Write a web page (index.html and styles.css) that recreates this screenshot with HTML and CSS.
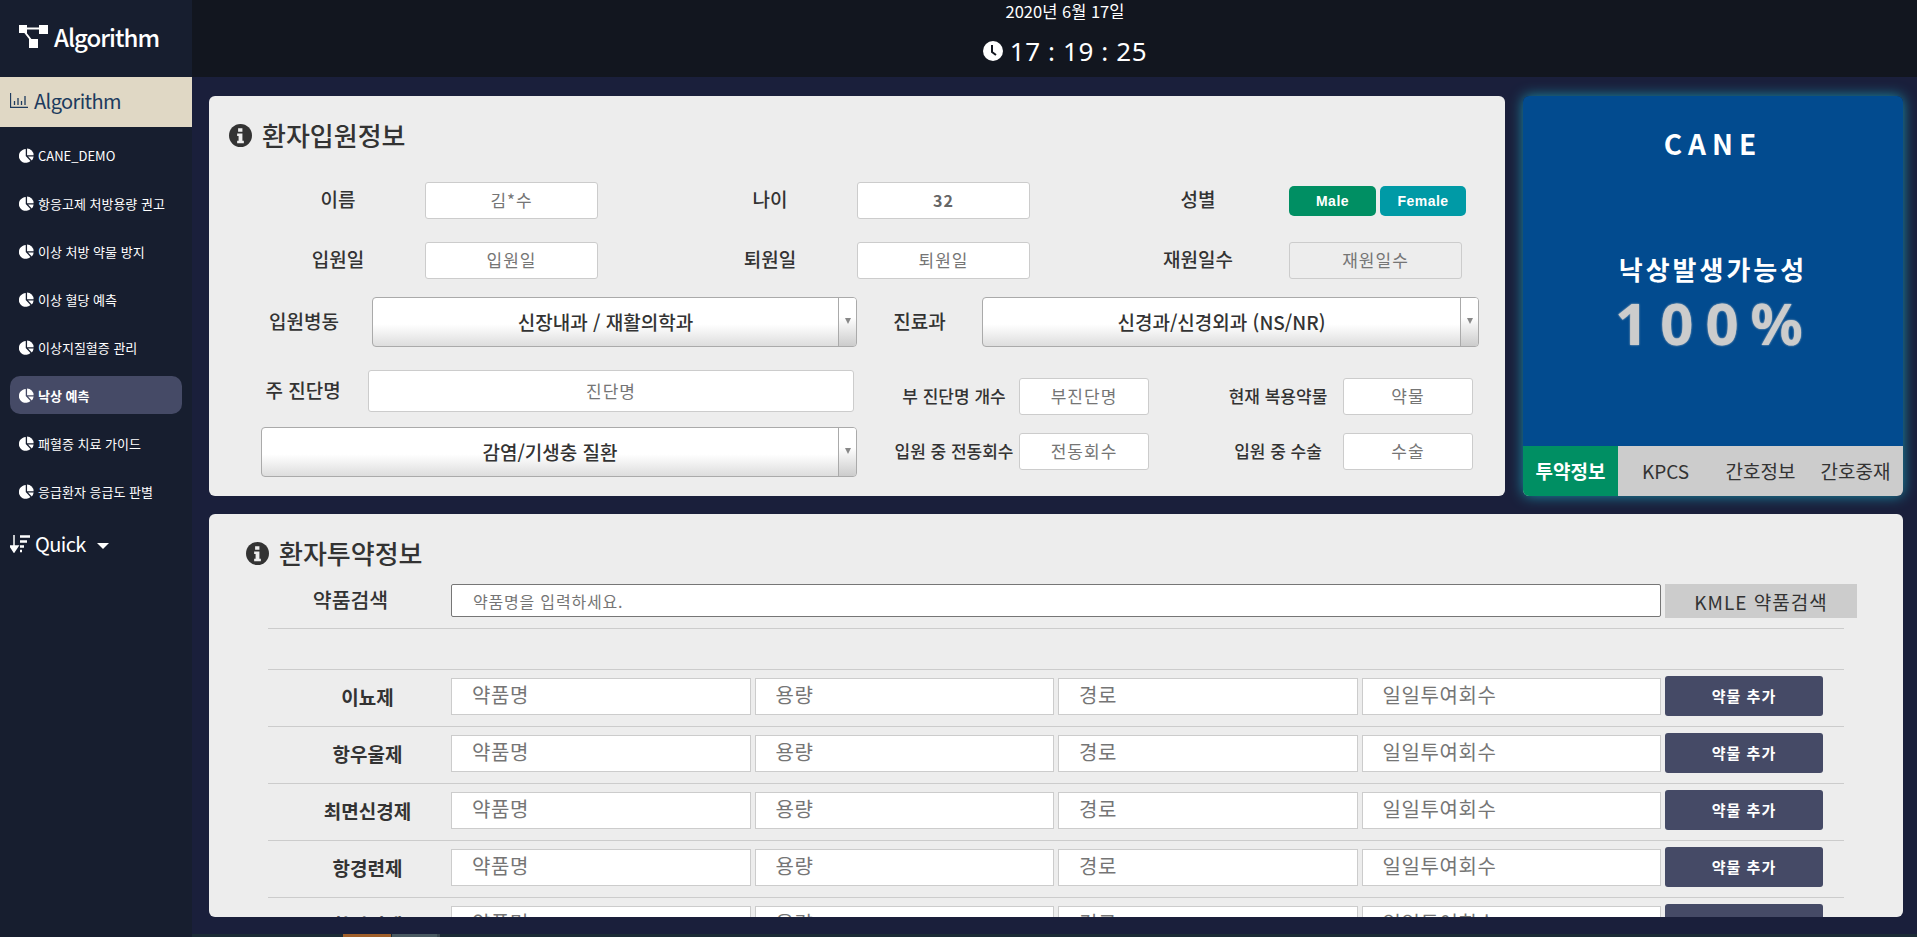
FILE: index.html
```html
<!DOCTYPE html>
<html lang="ko">
<head>
  <meta charset="UTF-8">
  <meta name="viewport" content="width=device-width, initial-scale=1.0">
  <title>CANE Algorithm</title>
  <link rel="stylesheet" href="styles.css">
</head>
<body>
  <!-- Side menu -->
  <aside class="sidebar">
    <div class="logo">
      <svg class="logo-icon" viewBox="0 0 30 24" width="30" height="24">
        <rect x="0" y="0" width="8" height="8" fill="#fff"/>
        <rect x="20" y="0" width="9" height="9" fill="#fff"/>
        <rect x="10" y="14" width="9" height="9" fill="#fff"/>
        <path d="M6 3.5h15M5 6l7 9" stroke="#fff" stroke-width="2" fill="none"/>
      </svg>
      <span>Algorithm</span>
    </div>
    <div class="menu-head">
      <svg viewBox="0 0 18 15" width="18" height="15">
        <path d="M.5 0v14.5H18M4.5 8v4M8 5v7M11.5 8v4M15 3v9" stroke="#1d3b5e" stroke-width="1.3" fill="none"/>
      </svg>
      <span>Algorithm</span>
    </div>
    <ul class="menu">
      <li><svg class="pie" viewBox="0 0 16 16"><use href="#pie"/></svg>CANE_DEMO</li>
      <li><svg class="pie" viewBox="0 0 16 16"><use href="#pie"/></svg>항응고제 처방용량 권고</li>
      <li><svg class="pie" viewBox="0 0 16 16"><use href="#pie"/></svg>이상 처방 약물 방지</li>
      <li><svg class="pie" viewBox="0 0 16 16"><use href="#pie"/></svg>이상 혈당 예측</li>
      <li><svg class="pie" viewBox="0 0 16 16"><use href="#pie"/></svg>이상지질혈증 관리</li>
      <li class="active"><svg class="pie" viewBox="0 0 16 16"><use href="#pie"/></svg>낙상 예측</li>
      <li><svg class="pie" viewBox="0 0 16 16"><use href="#pie"/></svg>패혈증 치료 가이드</li>
      <li><svg class="pie" viewBox="0 0 16 16"><use href="#pie"/></svg>응급환자 응급도 판별</li>
    </ul>
    <div class="quick">
      <svg viewBox="0 0 20 18" width="20" height="18">
        <path d="M4 0v13M0 11l4 6 4-6z" fill="#fff" stroke="#fff" stroke-width="1.5"/>
        <path d="M10 1.5h10M10 6.5h7M10 11.5h4M10 16h2" stroke="#fff" stroke-width="2.4" fill="none"/>
      </svg>
      <span>Quick</span>
      <i class="caret"></i>
    </div>
  </aside>

  <div class="main">
    <header class="topbar">
      <div class="date">2020년 6월 17일</div>
      <div class="time">
        <svg viewBox="0 0 20 20" width="20" height="20">
          <circle cx="10" cy="10" r="10" fill="#fff"/>
          <path d="M9 4v7l4 3" stroke="#12161f" stroke-width="2" fill="none"/>
        </svg>
        <span>17 : 19 : 25</span>
      </div>
    </header>

    <div class="content">
      <div class="top-row">
        <!-- 환자입원정보 -->
        <section class="panel admit">
          <h2 class="title">
            <svg class="info" viewBox="0 0 24 24"><use href="#info"/></svg>
            환자입원정보
          </h2>

          <div class="row row-one">
            <label class="lbl col-a">이름</label>
            <input class="box" type="text" placeholder="김*수">
            <label class="lbl col-b">나이</label>
            <input class="box strong" type="text" value="32">
            <label class="lbl col-c">성별</label>
            <button class="sex male" type="button">Male</button>
            <button class="sex female" type="button">Female</button>
          </div>

          <div class="row row-two">
            <label class="lbl col-a">입원일</label>
            <input class="box" type="text" placeholder="입원일">
            <label class="lbl col-b">퇴원일</label>
            <input class="box" type="text" placeholder="퇴원일">
            <label class="lbl col-c">재원일수</label>
            <input class="box off" type="text" placeholder="재원일수" disabled>
          </div>

          <div class="row row-three">
            <label class="lbl ward-lbl">입원병동</label>
            <div class="select ward"><span>신장내과 / 재활의학과</span><b></b></div>
            <label class="lbl dept-lbl">진료과</label>
            <div class="select dept"><span>신경과/신경외과 (NS/NR)</span><b></b></div>
          </div>

          <div class="bottom">
            <div class="bottom-left">
              <div class="row">
                <label class="lbl diag-lbl">주 진단명</label>
                <input class="box diag" type="text" placeholder="진단명">
              </div>
              <div class="select disease"><span>감염/기생충 질환</span><b></b></div>
            </div>
            <div class="bottom-right">
              <div class="row">
                <label class="lbl small col-d">부 진단명 개수</label>
                <input class="box short" type="text" placeholder="부진단명">
                <label class="lbl small col-e">현재 복용약물</label>
                <input class="box short" type="text" placeholder="약물">
              </div>
              <div class="row">
                <label class="lbl small col-d">입원 중 전동회수</label>
                <input class="box short" type="text" placeholder="전동회수">
                <label class="lbl small col-e">입원 중 수술</label>
                <input class="box short" type="text" placeholder="수술">
              </div>
            </div>
          </div>
        </section>

        <!-- 낙상 결과 -->
        <section class="result">
          <div class="stage">
            <div class="brand">CANE</div>
            <div class="chance">낙상발생가능성</div>
            <div class="percent">100%</div>
          </div>
          <div class="tabs">
            <div class="tab on">투약정보</div>
            <div class="tab">KPCS</div>
            <div class="tab">간호정보</div>
            <div class="tab">간호중재</div>
          </div>
        </section>
      </div>

      <!-- 환자투약정보 -->
      <section class="panel drugs">
        <h2 class="title">
          <svg class="info" viewBox="0 0 24 24"><use href="#info"/></svg>
          환자투약정보
        </h2>

        <div class="search">
          <label class="drug-lbl search-lbl">약품검색</label>
          <input class="search-box" type="text" placeholder="약품명을 입력하세요.">
          <button class="kmle" type="button">KMLE 약품검색</button>
        </div>
        <div class="blank"></div>

        <div class="drug-row">
          <label class="drug-lbl">이뇨제</label>
          <div class="drug-fields">
            <input type="text" placeholder="약품명"><input type="text" placeholder="용량"><input type="text" placeholder="경로"><input type="text" placeholder="일일투여회수">
          </div>
          <button class="add" type="button">약물 추가</button>
        </div>
        <div class="drug-row">
          <label class="drug-lbl">항우울제</label>
          <div class="drug-fields">
            <input type="text" placeholder="약품명"><input type="text" placeholder="용량"><input type="text" placeholder="경로"><input type="text" placeholder="일일투여회수">
          </div>
          <button class="add" type="button">약물 추가</button>
        </div>
        <div class="drug-row">
          <label class="drug-lbl">최면신경제</label>
          <div class="drug-fields">
            <input type="text" placeholder="약품명"><input type="text" placeholder="용량"><input type="text" placeholder="경로"><input type="text" placeholder="일일투여회수">
          </div>
          <button class="add" type="button">약물 추가</button>
        </div>
        <div class="drug-row">
          <label class="drug-lbl">항경련제</label>
          <div class="drug-fields">
            <input type="text" placeholder="약품명"><input type="text" placeholder="용량"><input type="text" placeholder="경로"><input type="text" placeholder="일일투여회수">
          </div>
          <button class="add" type="button">약물 추가</button>
        </div>
        <div class="drug-row">
          <label class="drug-lbl">항정신제</label>
          <div class="drug-fields">
            <input type="text" placeholder="약품명"><input type="text" placeholder="용량"><input type="text" placeholder="경로"><input type="text" placeholder="일일투여회수">
          </div>
          <button class="add" type="button">약물 추가</button>
        </div>
      </section>
    </div>

    <div class="strip"><i class="strip-a"></i><i class="strip-b"></i><i class="strip-c"></i></div>
  </div>

  <!-- Shared icons -->
  <svg class="defs" width="0" height="0">
    <symbol id="pie" viewBox="0 0 16 16">
      <path d="M7.2 1.2v7.4l5 5.2A7.3 7.3 0 1 1 7.2 1.2z" fill="#fff"/>
      <path d="M8.6.6a7.3 7.3 0 0 1 7 7H8.6z" fill="#fff"/>
      <path d="M9.6 9h6a7.2 7.2 0 0 1-2 4.3z" fill="#fff"/>
    </symbol>
    <symbol id="info" viewBox="0 0 24 24">
      <circle cx="12" cy="12" r="12" fill="#333"/>
      <path d="M9.5 4.5h4.5v3.6H9.5zM8.5 10h5.5v7.5h1.5V20h-7v-2.5H10v-5H8.5z" fill="#eee"/>
    </symbol>
  </svg>
</body>
</html>
```

FILE: styles.css
```css
* {
  box-sizing: border-box;
}
html, body {
  height: 100%;
}
body {
  margin: 0;
  display: flex;
  overflow: hidden;
  font-family: "Noto Sans CJK KR", "Noto Sans", sans-serif;
  background-color: #1a1f3b;
  color: #333;
}
input, button {
  font-family: inherit;
}
.defs {
  position: absolute;
}

/* Sidebar */
.sidebar {
  width: 192px;
  flex-shrink: 0;
  background-color: #171e2f;
  color: white;
}
.logo {
  height: 77px;
  display: flex;
  align-items: center;
  padding: 0 0 4px 19px;
  gap: 5px;
  font-size: 24px;
  font-weight: 500;
  letter-spacing: -1px;
}
.menu-head {
  height: 50px;
  display: flex;
  align-items: center;
  gap: 6px;
  padding: 0 0 3px 10px;
  background-color: #e0d8c5;
  color: #1d3b5e;
  font-size: 20px;
  letter-spacing: -.6px;
}
.menu {
  list-style: none;
  margin: 9px 0 0;
  padding: 0 10px;
}
.menu li {
  height: 38px;
  margin-bottom: 10px;
  display: flex;
  align-items: center;
  gap: 4px;
  padding-left: 9px;
  font-size: 13px;
  border-radius: 10px;
}
.menu li.active {
  background-color: #454a66;
  font-weight: bold;
}
.pie {
  width: 15px;
  height: 15px;
}
.quick {
  margin-top: 19px;
  padding-left: 10px;
  display: flex;
  align-items: center;
  gap: 5px;
  font-size: 20px;
  letter-spacing: -.6px;
}
.caret {
  margin: 4px 0 0 6px;
  border-left: 6px solid transparent;
  border-right: 6px solid transparent;
  border-top: 6px solid white;
}

/* Main area */
.main {
  flex: 1;
  min-width: 0;
  display: flex;
  flex-direction: column;
}
.topbar {
  height: 77px;
  flex-shrink: 0;
  background-color: #12161f;
  color: white;
  padding-left: 21px;
  text-align: center;
}
.date {
  font-size: 16.5px;
  line-height: 22px;
}
.time {
  margin-top: 11px;
  display: flex;
  align-items: center;
  justify-content: center;
  gap: 7px;
  font-family: "Noto Sans", sans-serif;
  font-size: 26px;
  line-height: 36px;
  letter-spacing: .6px;
}
.content {
  flex: 1;
  padding: 19px 14px 17px 17px;
}
.strip {
  height: 3px;
  flex-shrink: 0;
  display: flex;
  background-color: #1c2b36;
}
.strip i {
  display: block;
}
.strip-a {
  width: 48px;
  margin-left: 151px;
  background-color: #a05f2a;
}
.strip-b {
  width: 45px;
  margin-left: 1px;
  background-color: #4a5a62;
}
.strip-c {
  width: 3px;
  background-color: #3a4750;
}

.top-row {
  display: flex;
  gap: 18px;
  margin-bottom: 18px;
}
.panel {
  background-color: #ededed;
  border-radius: 6px;
}
.admit {
  width: 1296px;
  height: 400px;
  padding-top: 21px;
}
.title {
  margin: 0;
  display: flex;
  align-items: center;
  gap: 10px;
  padding-left: 20px;
  font-size: 26px;
  font-weight: 500;
  line-height: 36px;
}
.info {
  width: 23px;
  height: 23px;
}

/* Admission form */
.row {
  display: flex;
  align-items: center;
}
.row-one {
  margin-top: 29px;
}
.row-two {
  margin-top: 23px;
}
.row-three {
  margin-top: 18px;
}
.lbl {
  flex-shrink: 0;
  margin-bottom: 4px;
  font-size: 19px;
  font-weight: 500;
  text-align: center;
  white-space: nowrap;
}
.lbl.small {
  margin-bottom: 2px;
  font-size: 17px;
}
.col-a {
  width: 216px;
  padding-left: 42px;
}
.col-b {
  width: 259px;
  padding-left: 85px;
}
.col-c {
  width: 259px;
  padding-left: 77px;
}
.box {
  width: 173px;
  height: 37px;
  flex-shrink: 0;
  border: 1px solid #ccc;
  border-radius: 3px;
  background-color: white;
  padding: 0 0 2px;
  text-align: center;
  font-size: 17px;
  letter-spacing: 1px;
  color: #666;
}
.box.strong {
  font-size: 16px;
  font-weight: bold;
}
.box.off {
  background-color: #ededed;
}
.sex {
  height: 30px;
  border: none;
  border-radius: 5px;
  color: white;
  font-family: "Liberation Sans", sans-serif;
  font-size: 14px;
  font-weight: bold;
  letter-spacing: .5px;
}
.male {
  width: 87px;
  margin-right: 4px;
  background-color: #008f63;
}
.female {
  width: 86px;
  background-color: #009aa6;
}
.select {
  height: 50px;
  flex-shrink: 0;
  display: flex;
  align-items: stretch;
  border: 1px solid #aaa;
  border-radius: 4px;
  background: linear-gradient(#fff 55%, #ddd);
  font-size: 19px;
  font-weight: 500;
}
.select span {
  flex: 1;
  align-self: center;
  padding-bottom: 2px;
  text-align: center;
}
.select b {
  width: 18px;
  display: flex;
  align-items: center;
  justify-content: center;
  border-left: 1px solid #aaa;
  background: linear-gradient(#fff 40%, #ccc);
  border-radius: 0 3px 3px 0;
}
.select b::after {
  content: "";
  border-left: 3px solid transparent;
  border-right: 3px solid transparent;
  border-top: 6px solid #888;
  margin-bottom: 2px;
}
.ward-lbl {
  width: 163px;
  padding-left: 27px;
}
.ward {
  width: 485px;
}
.dept-lbl {
  width: 125px;
}
.dept {
  width: 497px;
}
.bottom {
  display: flex;
  margin-top: 23px;
}
.bottom-left {
  width: 648px;
  flex-shrink: 0;
}
.diag-lbl {
  width: 159px;
  padding-left: 29px;
}
.box.diag {
  width: 486px;
  height: 42px;
}
.disease {
  width: 596px;
  margin: 15px 0 0 52px;
}
.bottom-right {
  padding-top: 8px;
  display: flex;
  flex-direction: column;
  gap: 18px;
}
.col-d {
  width: 162px;
  padding-left: 32px;
}
.col-e {
  width: 194px;
  padding-left: 64px;
}
.box.short {
  width: 130px;
}

/* Result card */
.result {
  width: 380px;
  height: 400px;
  display: flex;
  flex-direction: column;
  border-radius: 6px;
  overflow: hidden;
  box-shadow: 0 0 14px #1a8fa8;
}
.stage {
  flex: 1;
  padding-top: 27px;
  background-color: #024b8f;
  color: white;
  text-align: center;
}
.brand {
  font-size: 28px;
  font-weight: bold;
  line-height: 40px;
  letter-spacing: 6px;
}
.chance {
  margin-top: 86px;
  font-size: 26px;
  font-weight: bold;
  line-height: 40px;
  letter-spacing: 3px;
}
.percent {
  padding-left: 4px;
  margin-top: 1px;
  font-family: "Noto Sans", sans-serif;
  font-size: 58px;
  font-weight: bold;
  line-height: 66px;
  letter-spacing: 12px;
  color: #ccc;
  text-shadow: 0 0 2px #ccc;
}
.tabs {
  height: 50px;
  flex-shrink: 0;
  display: flex;
  background-color: #ccc;
}
.tab {
  width: 95px;
  display: flex;
  align-items: center;
  justify-content: center;
  padding-bottom: 2px;
  font-size: 19px;
  color: #333;
}
.tab.on {
  background-color: #008f63;
  color: white;
  font-weight: bold;
}

/* Medication panel */
.drugs {
  height: 403px;
  padding-top: 21px;
  overflow: hidden;
}
.drugs .title {
  padding-left: 37px;
  margin-bottom: 13px;
}
.search {
  display: flex;
  align-items: flex-start;
  margin-left: 59px;
  height: 44px;
}
.drug-lbl {
  width: 183px;
  flex-shrink: 0;
  padding-left: 16px;
  text-align: center;
  font-size: 19px;
  font-weight: bold;
  white-space: nowrap;
}
.search-lbl {
  padding: 0 18px 0 0;
  font-size: 20.5px;
  font-weight: 500;
  line-height: 30px;
}
.search-box {
  width: 1210px;
  height: 33px;
  flex-shrink: 0;
  margin-right: 4px;
  border: 1px solid #767676;
  border-radius: 2px;
  padding-left: 21px;
  font-size: 16px;
  letter-spacing: .8px;
}
.kmle {
  width: 192px;
  height: 34px;
  flex-shrink: 0;
  border: none;
  background-color: #ccc;
  color: #333;
  font-size: 19px;
  letter-spacing: 1px;
}
.blank {
  width: 1576px;
  height: 41px;
  margin-left: 59px;
  border-top: 1px solid #ccc;
}
.drug-row {
  width: 1576px;
  height: 57px;
  margin-left: 59px;
  padding: 6px 0 10px;
  border-top: 1px solid #ccc;
  display: flex;
  align-items: center;
}
.drug-fields {
  width: 1210px;
  flex-shrink: 0;
  margin-right: 4px;
  display: grid;
  grid-template-columns: repeat(4, 1fr);
  gap: 4px;
}
.drug-fields input {
  width: 100%;
  height: 37px;
  border: 1px solid #ccc;
  background-color: white;
  padding: 0 0 4px 20px;
  font-size: 20px;
  letter-spacing: .6px;
}
.add {
  width: 158px;
  height: 40px;
  flex-shrink: 0;
  border: none;
  border-radius: 3px;
  background-color: #454a66;
  color: white;
  padding-bottom: 3px;
  font-size: 15px;
  font-weight: bold;
  letter-spacing: 1px;
}
```
